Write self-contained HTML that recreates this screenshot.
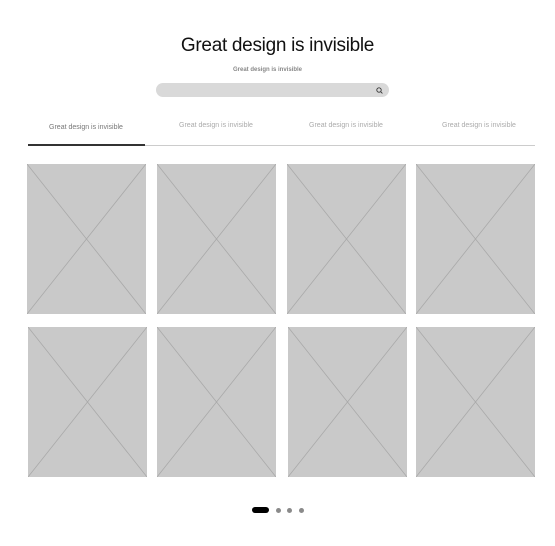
<!DOCTYPE html>
<html><head><style>
body{margin:0;width:555px;height:546px;background:#fff;position:relative;font-family:"Liberation Sans",sans-serif;overflow:hidden}
.a{position:absolute}
.t{left:0;width:555px;text-align:center}
.card{position:absolute;width:119px;height:150px;background:#c9c9c9}
.card svg{display:block}
.tab{position:absolute;width:130px;text-align:center;font-size:7px;color:#aaa;top:122px}
.dot{position:absolute;top:508px;width:5px;height:5px;border-radius:50%;background:#8a8a8a}
</style></head><body>
<div class="a t" style="top:35px;font-size:19px;color:#111;letter-spacing:-0.3px">Great design is invisible</div>
<div class="a t" style="top:67px;left:-10px;font-size:6px;color:#888;font-weight:bold">Great design is invisible</div>
<div class="a" style="left:156px;top:83px;width:233px;height:14px;border-radius:7px;background:#d9d9d9"></div>
<svg class="a" style="left:376px;top:87px" width="7" height="7" viewBox="0 0 7 7"><circle cx="3" cy="3" r="2.2" fill="none" stroke="#333" stroke-width="0.9"/><line x1="4.6" y1="4.6" x2="6.4" y2="6.4" stroke="#333" stroke-width="0.9"/></svg>
<div class="tab" style="left:21px;top:124px;color:#777">Great design is invisible</div>
<div class="tab" style="left:151px">Great design is invisible</div>
<div class="tab" style="left:281px">Great design is invisible</div>
<div class="tab" style="left:414px">Great design is invisible</div>
<div class="a" style="left:28px;top:145px;width:507px;height:1px;background:#ccc"></div>
<div class="a" style="left:28px;top:144px;width:117px;height:2px;background:#333"></div>
<div class="card" style="left:27px;top:164px"><svg width="119" height="150"><path d="M0 0L119 150M119 0L0 150" stroke="#a9a9a9" stroke-width="0.8"/></svg></div>
<div class="card" style="left:157px;top:164px"><svg width="119" height="150"><path d="M0 0L119 150M119 0L0 150" stroke="#a9a9a9" stroke-width="0.8"/></svg></div>
<div class="card" style="left:287px;top:164px"><svg width="119" height="150"><path d="M0 0L119 150M119 0L0 150" stroke="#a9a9a9" stroke-width="0.8"/></svg></div>
<div class="card" style="left:416px;top:164px"><svg width="119" height="150"><path d="M0 0L119 150M119 0L0 150" stroke="#a9a9a9" stroke-width="0.8"/></svg></div>
<div class="card" style="left:28px;top:327px"><svg width="119" height="150"><path d="M0 0L119 150M119 0L0 150" stroke="#a9a9a9" stroke-width="0.8"/></svg></div>
<div class="card" style="left:157px;top:327px"><svg width="119" height="150"><path d="M0 0L119 150M119 0L0 150" stroke="#a9a9a9" stroke-width="0.8"/></svg></div>
<div class="card" style="left:288px;top:327px"><svg width="119" height="150"><path d="M0 0L119 150M119 0L0 150" stroke="#a9a9a9" stroke-width="0.8"/></svg></div>
<div class="card" style="left:416px;top:327px"><svg width="119" height="150"><path d="M0 0L119 150M119 0L0 150" stroke="#a9a9a9" stroke-width="0.8"/></svg></div>
<div class="a" style="left:252px;top:507px;width:17px;height:6px;border-radius:3px;background:#000"></div>
<div class="dot" style="left:276px"></div>
<div class="dot" style="left:287px"></div>
<div class="dot" style="left:299px"></div>
</body></html>
